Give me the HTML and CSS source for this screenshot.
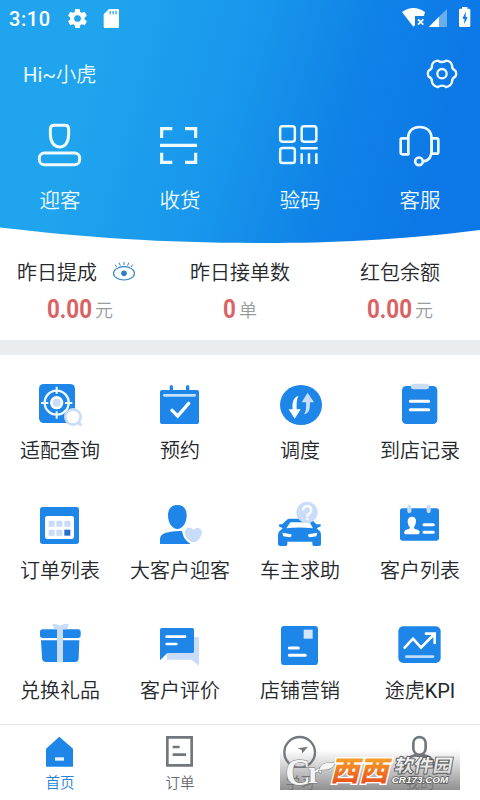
FILE: index.html
```html
<!DOCTYPE html>
<html lang="zh-CN">
<head>
<meta charset="utf-8">
<title>首页</title>
<link rel="stylesheet" href="styles.css">
</head>
<body>
<div class="app">
  <header class="hero">
    <div class="status">
      <span class="time">3:10</span>
      <svg class="s-cog" viewBox="0 0 24 24"><path fill="#fff" d="M19.4 13c0-.3.1-.6.1-1s0-.7-.1-1l2.1-1.600c.2-.2.2-.4.1-.6l-2-3.500c-.1-.2-.4-.3-.6-.2l-2.500 1c-.5-.4-1.100-.7-1.700-1L14.400 2.500c0-.300-.2-.5-.5-.5h-4c-.3 0-.5.2-.5.500L9.100 5.100c-.6.300-1.200.600-1.700 1l-2.500-1c-.2-.1-.5 0-.6.200l-2 3.500c-.1.200-.1.500.1.600L4.500 11c0 .300-.1.700-.1 1s0 .7.1 1l-2.100 1.600c-.2.200-.2.400-.1.600l2 3.500c.1.200.4.300.6.200l2.500-1c.5.400 1.100.7 1.700 1l.4 2.600c0 .300.2.5.5.5h4c.3 0 .5-.2.5-.5l.4-2.600c.6-.3 1.200-.6 1.700-1l2.500 1c.2.100.5 0 .6-.2l2-3.500c.1-.2.1-.5-.1-.6zM12 15.500a3.500 3.500 0 1 1 0-7 3.500 3.500 0 0 1 0 7z"/></svg>
      <svg class="s-sd" viewBox="309 24 51 63"><path fill="#fff" d="M327 27h26q4 0 4 4v49q0 4-4 4h-38q-4 0-4-4V43z"/><path stroke="#5ab4f0" stroke-width="5" d="M331 33v10M339.500 33v10M348 33v10"/></svg>
      <svg class="s-net" viewBox="480 18 216 69"><path fill="#fff" d="M486 36q34-24 69 0l-3 12h-27v28l-5 4z"/><path stroke="#fff" stroke-width="5" d="m534 58 16 16m0-16-16 16"/><path fill="#6aaef0" d="M621 27v54h-24V50z"/><path fill="#fff" d="M597 50v31h-31z"/><path fill="#fff" d="M666 21h16v5h5q4 0 4 4v47q0 4-4 4h-26q-4 0-4-4V30q0-4 4-4h5z"/><path fill="#1280e8" d="M677 35 667 56h6v17l10-22h-6z"/></svg>
    </div>
    <div class="greet">
      <span><span class="latin">Hi~</span>小虎</span>
      <svg class="settings" viewBox="558 174 96 93"><g fill="none" stroke="#effaff" stroke-width="7"><path stroke-linejoin="round" d="M594 182q12 8 24 0q14 1 18 13q-1 13 10 17q5 9 0 18q-11 5-10 17q-5 12-18 14q-12-8-24 0q-13-2-18-14q1-12-10-17q-5-9 0-18q11-4 10-17q4-12 18-13z"/><circle cx="606" cy="221" r="14"/></g></svg>
    </div>
    <nav class="quick">
      <a><svg viewBox="90 30 180 144"><g fill="none" stroke="#effaff" stroke-width="9"><path d="M163 46h32q11 0 11 11v16c0 25-12 38-27 38s-28-13-28-38V57q0-11 12-11z"/><rect x="118" y="129" width="121" height="35" rx="15"/></g></svg><span>迎客</span></a>
      <a><svg viewBox="450 30 180 144"><path fill="none" stroke="#effaff" stroke-width="9.500" d="M485 84V56h32M555 56h32v28M485 128v29h32M555 157h32v-29M480 106h111"/></svg><span>收货</span></a>
      <a><svg viewBox="90 30 180 144"><g fill="none" stroke="#effaff" stroke-width="7.500"><rect x="120.500" y="49" width="44" height="46" rx="7"/><rect x="185" y="49" width="44" height="46" rx="7"/><rect x="120.500" y="114" width="44" height="45" rx="7"/><path d="M181 115h52M185 130v32M207 130v32M229 130v32"/></g></svg><span>验码</span></a>
      <a><svg viewBox="450 30 180 144"><g fill="none" stroke="#effaff" stroke-width="8"><path d="M504 85c1-23 16-34 35-34s35 11 36 34v34c0 20-6 33-25 35"/><path stroke-linejoin="round" d="M505 85h-19q-4 0-4 4v38q0 6 6 6h17zM575 85h15q5 0 5 5v35q0 6-5 6h-15z"/><circle cx="537" cy="154" r="11.500"/></g></svg><span>客服</span></a>
    </nav>
  </header>

  <section class="stats">
    <div class="stat"><div class="stat-title first">昨日提成<svg class="eye" viewBox="336 30 72 63"><g fill="none" stroke="#2d82c6" stroke-width="3.500"><ellipse cx="372" cy="67" rx="31.500" ry="20"/><path stroke-width="3" d="m345 41 5 7M357 35l4 9M372 33v9M386 35l-3 9M398 41l-5 7"/></g><circle cx="372" cy="67" r="8.500" fill="#2d82c6"/></svg></div><div class="value"><b class="amount">0.00</b><i>元</i></div></div>
    <div class="stat"><div class="stat-title">昨日接单数</div><div class="value"><b class="single">0</b><i>单</i></div></div>
    <div class="stat"><div class="stat-title">红包余额</div><div class="value"><b class="amount">0.00</b><i>元</i></div></div>
  </section>

  <main class="grid">
    <a><svg viewBox="90 24 180 144"><rect x="117" y="42" width="108" height="117" rx="14" fill="#1d86e8"/><g fill="none" stroke="#effaff" stroke-width="7"><circle cx="170" cy="98" r="36"/><path stroke-width="6" d="M170 50v22M170 124v22M123 99h22M195 99h22"/></g><circle cx="170" cy="98" r="20" fill="#fff"/><circle cx="170" cy="98" r="12" fill="#c9dcfa"/><circle cx="219" cy="141" r="23" fill="#fff" stroke="#c9dcfa" stroke-width="8"/><path stroke="#c9dcfa" stroke-width="9" d="m233 155 11 12"/></svg><span>适配查询</span></a>
    <a><svg viewBox="450 24 180 144"><path stroke="#1d86e8" stroke-width="10" stroke-linecap="round" d="M514 50v15M563 50v15"/><rect x="480" y="60" width="117" height="102" rx="6" fill="#1d86e8"/><path stroke="#c3e2fd" stroke-width="8" stroke-linecap="round" d="M493 76h91"/><path fill="none" stroke="#fff" stroke-width="10" stroke-linecap="round" d="m516 121 17 17 33-38"/></svg><span>预约</span></a>
    <a><svg viewBox="90 24 180 144"><ellipse cx="183" cy="105" rx="63" ry="60" fill="#1d86e8"/><path fill="#fff" d="M176 78c-7 10-6 25-6 40h12l-18 28-18-28h12c-2-18 1-37 18-40z"/><path fill="#c9dcfa" d="m203 68 19 29h-12c0 17 0 33-18 36 8-10 6-22 6-36h-13z"/></svg><span>调度</span></a>
    <a><svg viewBox="450 24 180 144"><rect x="486" y="48" width="106" height="114" rx="13" fill="#1d86e8"/><rect x="513" y="41" width="54" height="17" rx="7" fill="#c9dcfa"/><path stroke="#fff" stroke-width="9" stroke-linecap="round" d="M511 94h55M511 119h55"/></svg><span>到店记录</span></a>

    <a><svg viewBox="90 384 180 144"><rect x="120" y="411" width="117" height="111" rx="8" fill="#1d86e8"/><rect x="135" y="438" width="87" height="69" rx="7" fill="#fff"/><path fill="#c9dcfa" d="M146 452h18v18h-18zM169 452h18v18h-18zM193 452h18v18h-18zM146 479h18v18h-18zM169 479h18v18h-18z"/><path fill="#266fd2" d="M193 479h18v18h-18z"/></svg><span>订单列表</span></a>
    <a><svg viewBox="450 384 180 144"><path fill="#1d86e8" d="M532 405c19 0 28 13 28 31 0 23-12 41-28 41s-28-18-28-41c0-18 9-31 28-31z"/><path fill="#1d86e8" d="M480 522v-15q1-15 18-19 20-6 48-5l3 12q6 17 23 27z"/><path fill="#c9dcfa" d="M580 480c5-9 25-9 26 6 0 14-14 30-24 31-14-2-27-16-28-28 0-16 18-21 26-9z"/></svg><span>大客户迎客</span></a>
    <a><svg viewBox="90 384 180 144"><path fill="#1d86e8" d="m127 463 13-13q3-4 11-4h56q9 0 12 6l10 11h11q4 0 2 6l-12 6 11 10q2 3 2 11v27q0 5-6 5h-15q-5 0-5-6v-7h-75v7q0 6-5 6h-16q-7 0-7-5v-27q0-7 3-11l11-10-11-6q-2-6 2-6z"/><path fill="#fff" d="m151 457-12 18q39-5 80 0l-10-18zM127 488l27 5q2 9-5 9l-19-3zM232 488l-27 5q-2 9 5 9l19-3z"/><circle cx="201" cy="427" r="32" fill="#c9dcfa"/><path fill="none" stroke="#fff" stroke-width="7" d="M189 421c0-17 25-17 25 0 0 9-12 10-12 19"/><circle cx="202" cy="447" r="4" fill="#fff"/></svg><span>车主求助</span></a>
    <a><svg viewBox="450 384 180 144"><rect x="480" y="415" width="117" height="97" rx="7" fill="#1d86e8"/><g fill="#c9dcfa"><ellipse cx="508" cy="417" rx="6.500" ry="13"/><ellipse cx="566" cy="417" rx="6.500" ry="13"/></g><path fill="#fff" d="M516 440c17 0 13 23 6 31 0 4 1 6 5 7 19 4 10 15 9 15h-41c-1 0-8-12 9-15 4-1 6-3 5-7-8-10-10-31 7-31z"/><path stroke="#fff" stroke-width="9" stroke-linecap="round" d="M552 464h28M552 487h28"/></svg><span>客户列表</span></a>

    <a><svg viewBox="90 54 180 144"><rect x="120" y="88" width="122" height="26" rx="8" fill="#1d86e8"/><path fill="#1d86e8" d="M123 121h115l-2 52q0 13-12 13h-86q-11 0-12-13z"/><path fill="#c9dcfa" d="M171 82h18v104h-18zM156 71q17 0 24 6 10-7 27-5l-6 16h-38z"/></svg><span>兑换礼品</span></a>
    <a><svg viewBox="450 54 180 144"><path fill="#c9dcfa" d="M501 111h92q4 0 4 5v81l-23-18h-73z"/><path fill="#1d86e8" d="M485 84h92q5 0 5 5v65q0 5-5 5h-75l-22 22V89q0-5 5-5z"/><path stroke="#fff" stroke-width="8" stroke-linecap="round" d="M500 110h55M500 132h29"/></svg><span>客户评价</span></a>
    <a><svg viewBox="90 54 180 144"><rect x="123" y="78" width="111" height="117" rx="10" fill="#1d86e8"/><path fill="#d3e7fb" d="M191 89h27v27h-27z"/><path stroke="#fff" stroke-width="9" stroke-linecap="round" d="M148 144h27M148 166h48"/></svg><span>店铺营销</span></a>
    <a><svg viewBox="450 54 180 144"><rect x="475" y="79" width="127" height="110" rx="15" fill="#1d86e8"/><path fill="none" stroke="#fff" stroke-width="8" stroke-linecap="round" d="m494 143 25-27 24 27 40-41M558 101h26v28"/><path stroke="#b9ddfc" stroke-width="8" stroke-linecap="round" d="M499 170h80"/></svg><span>途虎<span class="latin">KPI</span></span></a>
  </main>

  <nav class="tabs">
    <a class="on"><svg viewBox="90 396 180 108"><path fill="#1d86e8" d="M178 410 219 446v54h-81v-54z"/><path fill="#e5f5ff" d="M165 472h27v10h-27z"/></svg><span>首页</span></a>
    <a><svg viewBox="450 396 180 108"><path fill="none" stroke="#72777e" stroke-width="8" d="M502 412h73v84h-73zM518 441h21M518 464h40"/></svg><span>订单</span></a>
    <a><svg viewBox="90 396 180 108"><circle cx="179" cy="457" r="46" fill="none" stroke="#72777e" stroke-width="7"/><path fill="#72777e" d="m173 445 31-5-17 20-2-10z"/></svg><span>学习</span></a>
    <a><svg viewBox="450 396 180 108"><path fill="none" stroke="#72777e" stroke-width="8" d="M520 430c0-25 37-25 37 0v14c0 27-37 27-37 0zM492 504c1-26 14-33 30-37h33c17 4 27 13 29 37"/></svg><span>我的</span></a>
    <svg class="mark" viewBox="120 405 540 165">
      <defs>
        <linearGradient id="shade" x2="0" y2="1"><stop offset="0" stop-color="#777" stop-opacity="0"/><stop offset="1" stop-color="#777" stop-opacity=".82"/></linearGradient>
        <linearGradient id="fire" x2="0" y2="1"><stop offset="0" stop-color="#fbc02c"/><stop offset="1" stop-color="#e6411b"/></linearGradient>
        <linearGradient id="silver" x2="0" y2="1"><stop offset="0" stop-color="#fff"/><stop offset="1" stop-color="#d3d3d3"/></linearGradient>
      </defs>
      <rect x="120" y="450" width="540" height="120" fill="url(#shade)"/>
      <g class="swash">
        <text class="mark-c" x="136" y="554" textLength="76" lengthAdjust="spacingAndGlyphs">C</text>
        <text class="mark-r" x="203" y="550">r</text>
        <path d="M236 513q8-31 49-24-9 23-39 20z"/>
      </g>
      <g transform="translate(270 542) skewX(-14)"><text class="mark-west" textLength="174" lengthAdjust="spacingAndGlyphs">西西</text></g>
      <g transform="translate(461 516) skewX(-10)"><text class="mark-soft" textLength="174" lengthAdjust="spacingAndGlyphs">软件园</text></g>
      <text class="mark-url" x="455" y="549" textLength="170" lengthAdjust="spacingAndGlyphs">CR173.COM</text>
    </svg>
  </nav>
</div>
</body>
</html>
```
FILE: styles.css
```css
* { box-sizing: border-box; }
body {
  margin: 0;
  background: #fff;
  font-family: Roboto, "Noto Sans CJK SC", sans-serif;
  font-weight: 350;
  color: #24282c;
}
svg { display: block; }
.app {
  width: 480px;
  height: 800px;
  display: flex;
  flex-direction: column;
  overflow: hidden;
}
.latin { font-weight: 400; }

.hero {
  height: 244px;
  color: #effaff;
  background: linear-gradient(106deg, #1fa4ed 20%, #1896ec 48%, #1083e7 68%, #0c77e6 90%);
  clip-path: path("M0 0H480V230C400 240 330 243 265 243C165 243 90 238 0 227.500Z");
}
.status {
  height: 37px;
  display: flex;
  align-items: center;
  padding: 0 8px 0 9px;
}
.time {
  width: 56px;
  padding-top: 1px;
  font: 500 20px/37px Roboto, sans-serif;
  letter-spacing: .6px;
  color: #fff;
}
.s-cog { width: 25px; height: 23px; }
.s-sd { width: 17px; height: 21px; margin-left: 13px; }
.s-net { width: 72px; height: 23px; margin-left: auto; margin-bottom: 2px; }
.greet {
  height: 73px;
  display: flex;
  align-items: center;
  justify-content: space-between;
  padding: 0 22px 0 23px;
  font-size: 20.2px;
}
.settings { width: 32px; height: 31px; }
.quick { display: grid; grid-template-columns: repeat(4, 1fr); padding-top: 10px; }
.quick a, .grid a, .tabs a {
  display: flex;
  flex-direction: column;
  align-items: center;
  white-space: nowrap;
}
.quick svg, .grid svg { width: 60px; height: 48px; }
.quick a > span { margin-top: 18px; font-size: 20.5px; line-height: 30px; }

.stats {
  height: 96px;
  padding-top: 14px;
  display: grid;
  grid-template-columns: repeat(3, 1fr);
}
.stat { display: flex; flex-direction: column; align-items: center; }
.stat-title { display: flex; align-items: center; font-size: 20px; line-height: 30px; }
.first { padding-right: 7px; }
.eye { width: 24px; height: 21px; margin: -3px 0 0 15px; }
.value { display: flex; align-items: center; height: 42px; }
.value b {
  display: block;
  font: 700 26px/42px Roboto, sans-serif;
  color: #da6265;
  transform: scaleX(.86);
  transform-origin: 0 50%;
}
.amount { width: 48px; }
.single { width: 16px; }
.value i { font-style: normal; font-size: 18px; color: #989d9f; }

.grid {
  height: 384px;
  border-top: 15px solid #e9edee;
  padding-top: 23px;
  display: grid;
  grid-template: repeat(3, 120px) / repeat(4, 1fr);
}
.grid a > span { margin-top: 10px; font-size: 20px; line-height: 30px; }

.tabs {
  position: relative;
  height: 76px;
  border-top: 1px solid #e4e5e8;
  padding-top: 7px;
  display: grid;
  grid-template-columns: repeat(4, 1fr);
  color: #656a70;
}
.tabs a svg { width: 60px; height: 36px; }
.tabs a > span { margin-top: 5px; font-size: 14.500px; line-height: 22px; }
.tabs .on { color: #2584d7; }
.mark { position: absolute; left: 280px; top: 10px; width: 180px; height: 55px; }
.swash { fill: #f4f4f4; stroke: #777; stroke-width: 3; paint-order: stroke; }
.mark-c { font: 700 112px "Liberation Serif", serif; }
.mark-r { font: 700 94px "Liberation Serif", serif; }
.mark-west { font: 900 84px "Noto Sans CJK SC", sans-serif; fill: url(#fire); stroke: #fff; stroke-width: 8; paint-order: stroke; }
.mark-soft { font: 700 54px "Noto Sans CJK SC", sans-serif; fill: url(#silver); stroke: #555; stroke-width: 5; paint-order: stroke; }
.mark-url { font: italic 700 29px "Liberation Sans", sans-serif; fill: #fff; stroke: #555; stroke-width: 4; paint-order: stroke; }
```
